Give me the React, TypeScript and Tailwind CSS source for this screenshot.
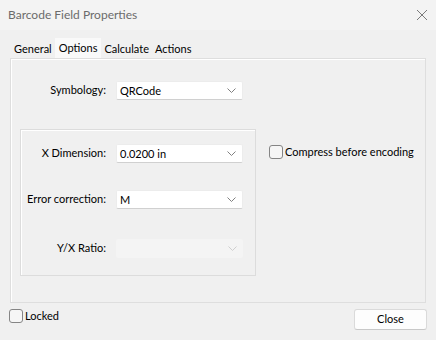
import React from 'react';

const font = { fontFamily: 'Lato, "Liberation Sans", sans-serif' };

function Chevron({ disabled }: { disabled?: boolean }) {
  return (
    <svg width="9" height="5" viewBox="0 0 9 5" className="shrink-0">
      <path d="M0.5 0.5 L4.5 4.5 L8.5 0.5" fill="none" stroke={disabled ? '#cfcfcf' : '#808080'} strokeWidth="1" />
    </svg>
  );
}

function Select({ value, disabled }: { value?: string; disabled?: boolean }) {
  return (
    <div
      className={`w-[127px] h-[19px] flex items-center justify-between pl-[3px] pr-[6px] rounded-[2px] ${
        disabled ? 'bg-[#f4f4f4]' : 'bg-white border border-[#ececec] border-b-[#d0d0d0]'
      }`}
    >
      <span className="text-[11px] text-black leading-none">{value}</span>
      <Chevron disabled={disabled} />
    </div>
  );
}

function Checkbox({ label }: { label: string }) {
  return (
    <div className="flex items-center gap-[2px] whitespace-nowrap">
      <div className="w-[14px] h-[14px] rounded-[3px] border border-[#858585] bg-[#f6f6f6]" />
      <span className="text-[11px] text-black">{label}</span>
    </div>
  );
}

function Row({ label, value, disabled, w }: { label: string; value?: string; disabled?: boolean; w: number }) {
  return (
    <div className="flex items-center">
      <span className="text-right text-[11px] text-black pr-[10px] whitespace-nowrap" style={{ width: w }}>
        {label}
      </span>
      <Select value={value} disabled={disabled} />
    </div>
  );
}

export default function App() {
  const tabs = ['General', 'Options', 'Calculate', 'Actions'];
  return (
    <div className="w-[436px] h-[340px] bg-[#f0f0f0] flex flex-col" style={font}>
      <div className="h-[30px] bg-[#f3f3f3] flex items-center justify-between pl-[8px] pr-[8px]">
        <span className="text-[12px] text-[#6b6b6b]">Barcode Field Properties</span>
        <svg width="12" height="12" viewBox="0 0 12 12">
          <path d="M1 1 L11 11 M11 1 L1 11" stroke="#7a7a7a" strokeWidth="1" />
        </svg>
      </div>

      <div className="flex items-end pl-[11px] pt-[8px] h-[28px]">
        {tabs.map((t) => (
          <div
            key={t}
            className={`text-[11px] text-black px-[3px] leading-[17px] ${
              t === 'Options' ? 'bg-[#f9f9f9] h-[20px] pt-[1px] px-[4px]' : 'h-[18px]'
            }`}
          >
            {t}
          </div>
        ))}
      </div>

      <div className="mx-[10px] w-[416px] h-[245px] bg-[#f0f0f0] border border-[#dedede] shadow-[inset_1px_1px_0_#ffffff] flex flex-col pt-[22px]">
        <Row label="Symbology:" value="QRCode" w={105} />
        <div className="flex mt-[29px] pl-[9px] gap-[13px]">
          <div className="w-[236px] h-[147px] shrink-0 border border-[#dcdcdc] shadow-[inset_1px_1px_0_#ffffff] flex flex-col gap-[27px] pt-[14px]">
            <Row label="X Dimension:" value="0.0200 in" w={95} />
            <Row label="Error correction:" value="M" w={95} />
            <div className="mt-[3px]">
              <Row label="Y/X Ratio:" disabled w={95} />
            </div>
          </div>
          <div className="pt-[15px]">
            <Checkbox label="Compress before encoding" />
          </div>
        </div>
      </div>

      <div className="flex items-start justify-between pl-[9px] pr-[9px] pt-[5px]">
        <Checkbox label="Locked" />
        <div className="mt-[1px] w-[73px] h-[21px] bg-[#fdfdfd] border border-[#dadada] border-b-[#c8c8c8] rounded-[3px] flex items-center justify-center text-[11px] text-black">
          Close
        </div>
      </div>
    </div>
  );
}
